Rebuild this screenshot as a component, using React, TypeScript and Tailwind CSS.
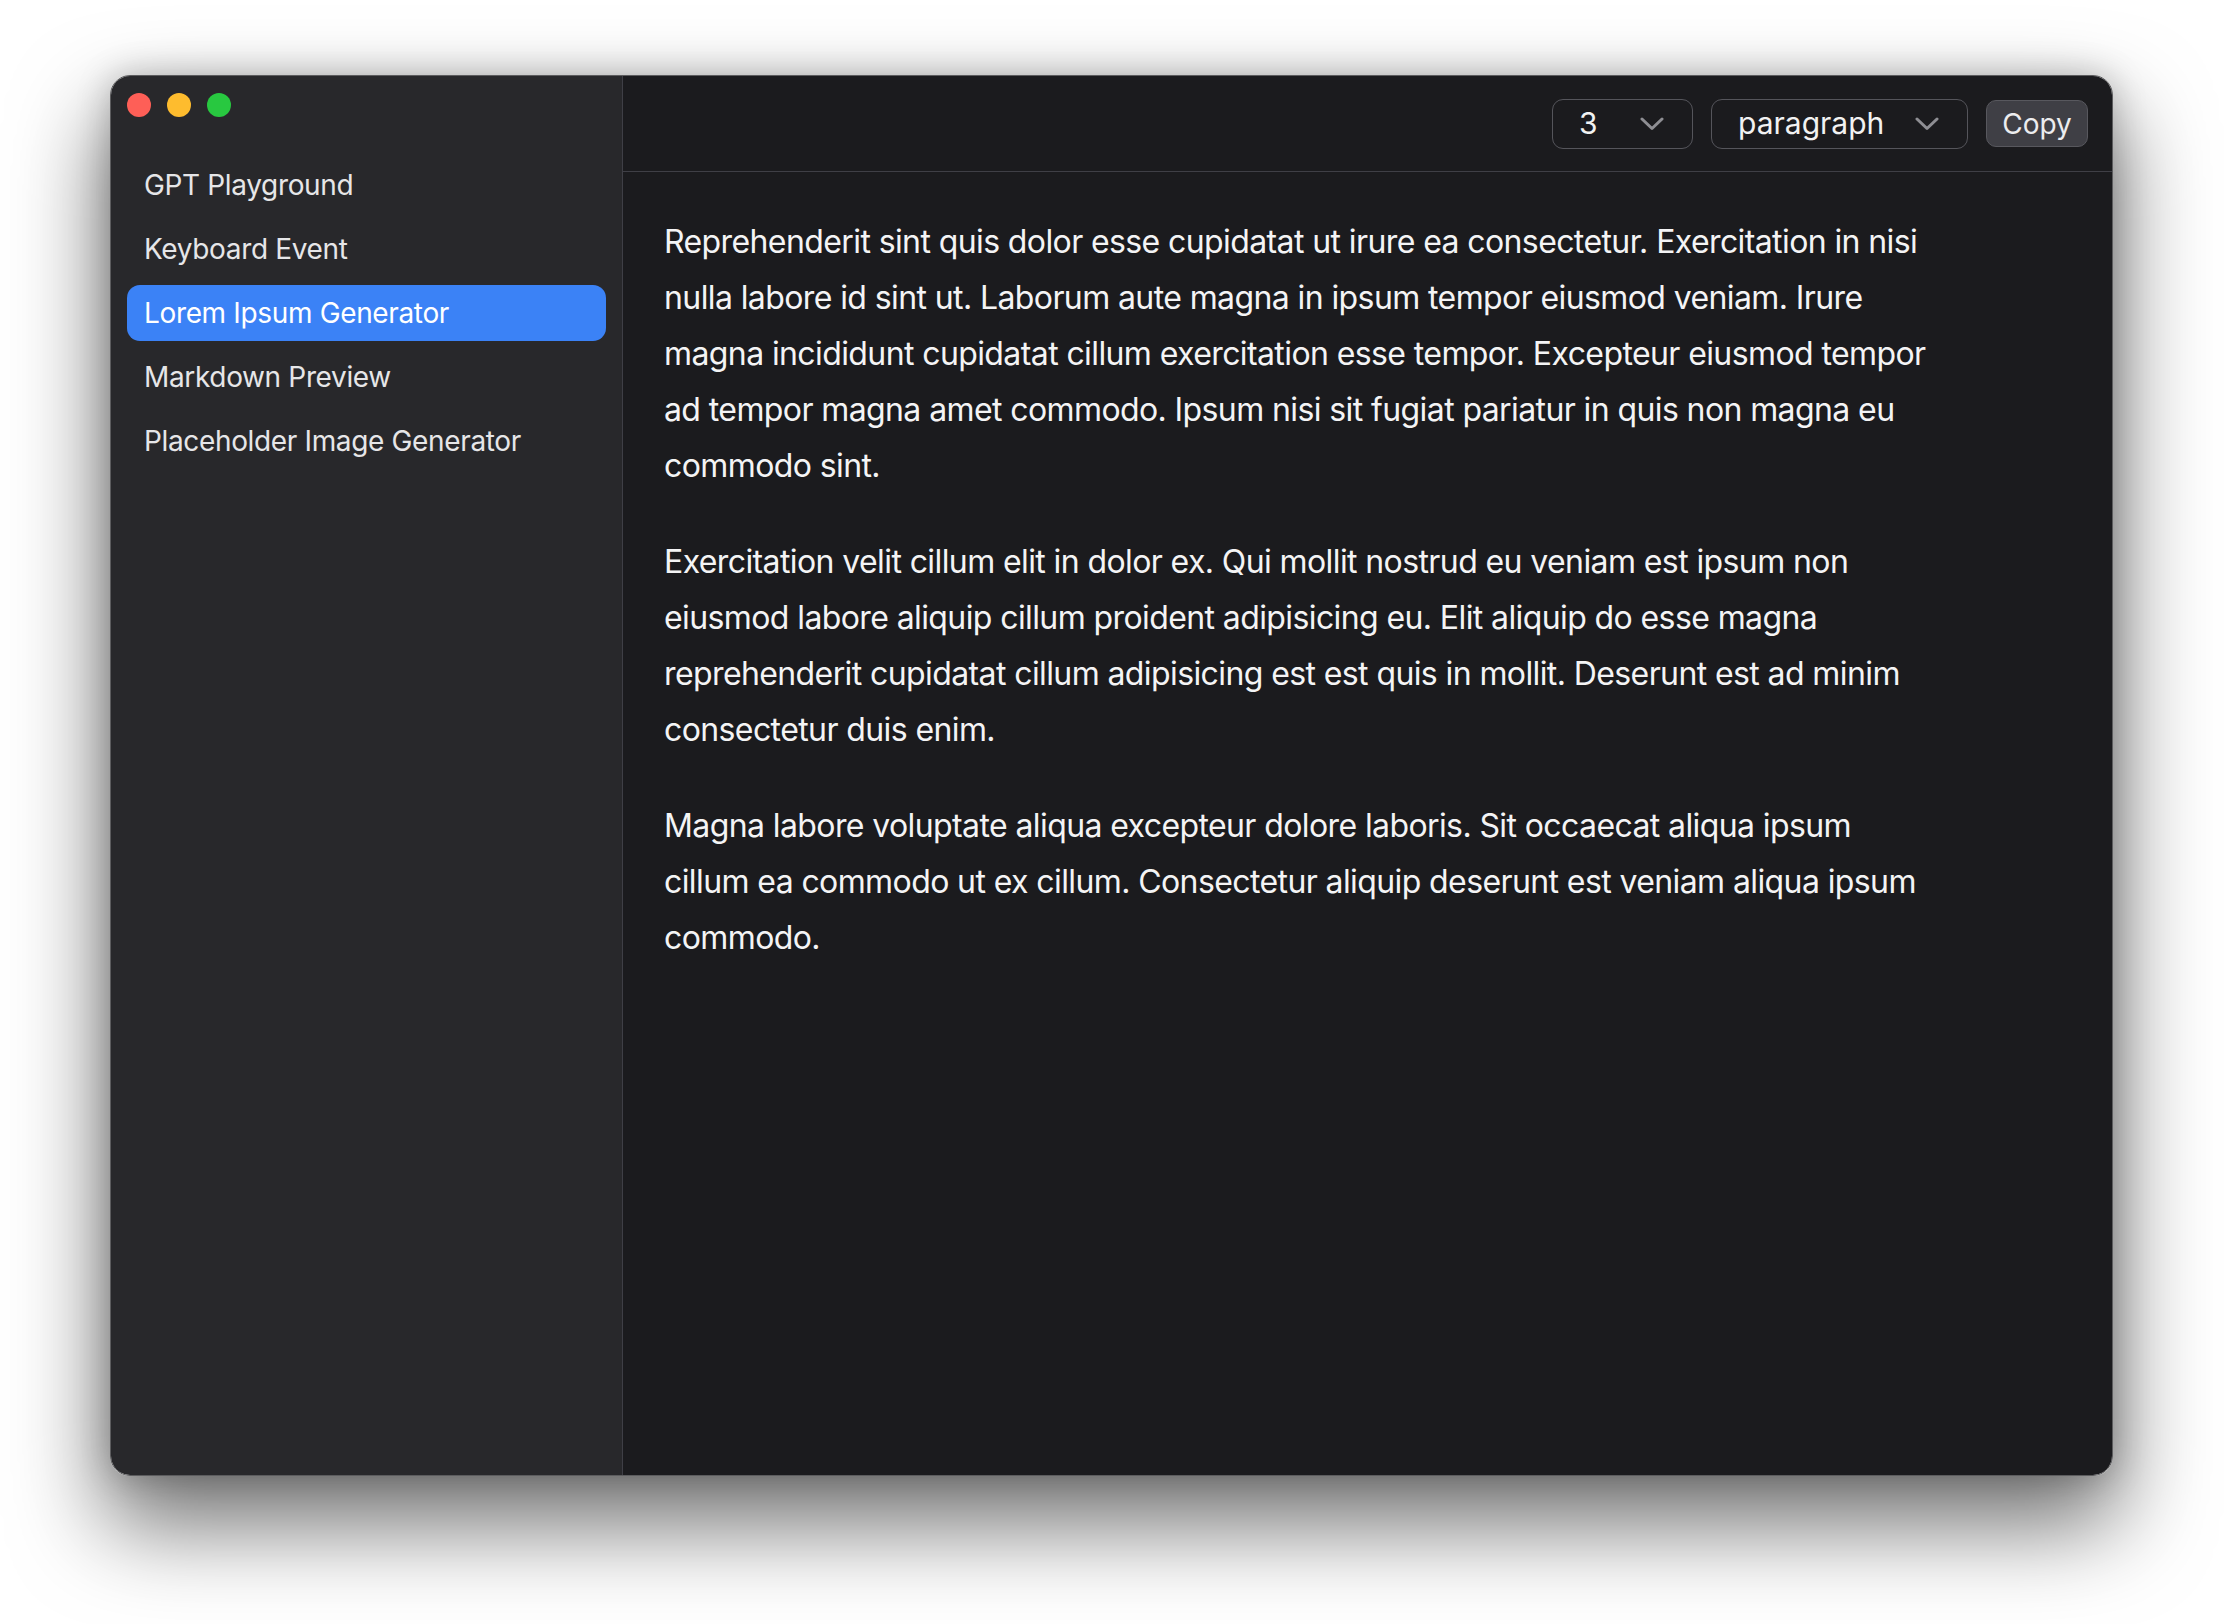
import React from "react";

const items = [
  "GPT Playground",
  "Keyboard Event",
  "Lorem Ipsum Generator",
  "Markdown Preview",
  "Placeholder Image Generator",
];

const paragraphs = [
  "Reprehenderit sint quis dolor esse cupidatat ut irure ea consectetur. Exercitation in nisi nulla labore id sint ut. Laborum aute magna in ipsum tempor eiusmod veniam. Irure magna incididunt cupidatat cillum exercitation esse tempor. Excepteur eiusmod tempor ad tempor magna amet commodo. Ipsum nisi sit fugiat pariatur in quis non magna eu commodo sint.",
  "Exercitation velit cillum elit in dolor ex. Qui mollit nostrud eu veniam est ipsum non eiusmod labore aliquip cillum proident adipisicing eu. Elit aliquip do esse magna reprehenderit cupidatat cillum adipisicing est est quis in mollit. Deserunt est ad minim consectetur duis enim.",
  "Magna labore voluptate aliqua excepteur dolore laboris. Sit occaecat aliqua ipsum cillum ea commodo ut ex cillum. Consectetur aliquip deserunt est veniam aliqua ipsum commodo.",
];

function Chevron() {
  return (
    <svg width="24" height="14" viewBox="0 0 24 14" fill="none">
      <path
        d="M2 2 L12 11.5 L22 2"
        stroke="#8e8e93"
        strokeWidth="3"
        strokeLinecap="round"
        strokeLinejoin="round"
      />
    </svg>
  );
}

export default function App() {
  return (
    <div
      className="min-h-[1624px] w-[2224px] bg-white pl-[110px] pt-[75px]"
      style={{ fontFamily: "Inter, 'Noto Sans', sans-serif" }}
    >
      <div className="flex h-[1401px] w-[2003px] overflow-hidden rounded-[20px] border border-[#5c5c5e] shadow-[0_44px_90px_6px_rgba(0,0,0,0.55),0_0_34px_rgba(0,0,0,0.22)]">
        <aside className="flex w-[512px] shrink-0 flex-col border-r border-[#3f3f46] bg-[#28282b]">
          <div className="flex gap-4 pl-[16px] pt-[17px]">
            <span className="h-6 w-6 rounded-full bg-[#fe5f57]" />
            <span className="h-6 w-6 rounded-full bg-[#febc2e]" />
            <span className="h-6 w-6 rounded-full bg-[#28c840]" />
          </div>
          <nav className="mt-10 flex flex-col gap-2 px-4">
            {items.map((it) => (
              <div
                key={it}
                className={
                  it === "Lorem Ipsum Generator"
                    ? "flex h-14 items-center rounded-[13px] bg-[#3b82f6] px-[17px] text-[28px] tracking-[-0.35px] text-white"
                    : "flex h-14 items-center rounded-[13px] px-[17px] text-[28px] tracking-[-0.35px] text-[#e6e6e8]"
                }
              >
                {it}
              </div>
            ))}
          </nav>
        </aside>
        <main className="flex flex-1 flex-col bg-[#1b1b1e]">
          <header className="flex h-[96px] shrink-0 items-center justify-end gap-[18px] border-b border-[#3f3f46] pr-[24px]">
            <div className="flex h-[50px] w-[141px] items-center justify-between rounded-[11px] border border-[#55555b] pl-[26px] pr-[28px] text-[30px] text-[#f2f2f2]">
              <span>3</span>
              <Chevron />
            </div>
            <div className="flex h-[50px] w-[257px] items-center justify-between rounded-[11px] border border-[#55555b] pl-[26px] pr-[28px] text-[30px] text-[#f2f2f2]">
              <span>paragraph</span>
              <Chevron />
            </div>
            <button className="flex h-[47px] w-[102px] items-center justify-center rounded-[10px] border border-[#58585e] bg-[#3f3f45] text-[28px] text-[#ececee]">
              Copy
            </button>
          </header>
          <div className="flex flex-col gap-10 px-[41px] pt-[42px]">
            {paragraphs.map((p, i) => (
              <p
                key={i}
                className="max-w-[1264px] text-[32px] leading-[56px] tracking-[-0.6px] text-[#f4f4f5]"
              >
                {p}
              </p>
            ))}
          </div>
        </main>
      </div>
    </div>
  );
}
